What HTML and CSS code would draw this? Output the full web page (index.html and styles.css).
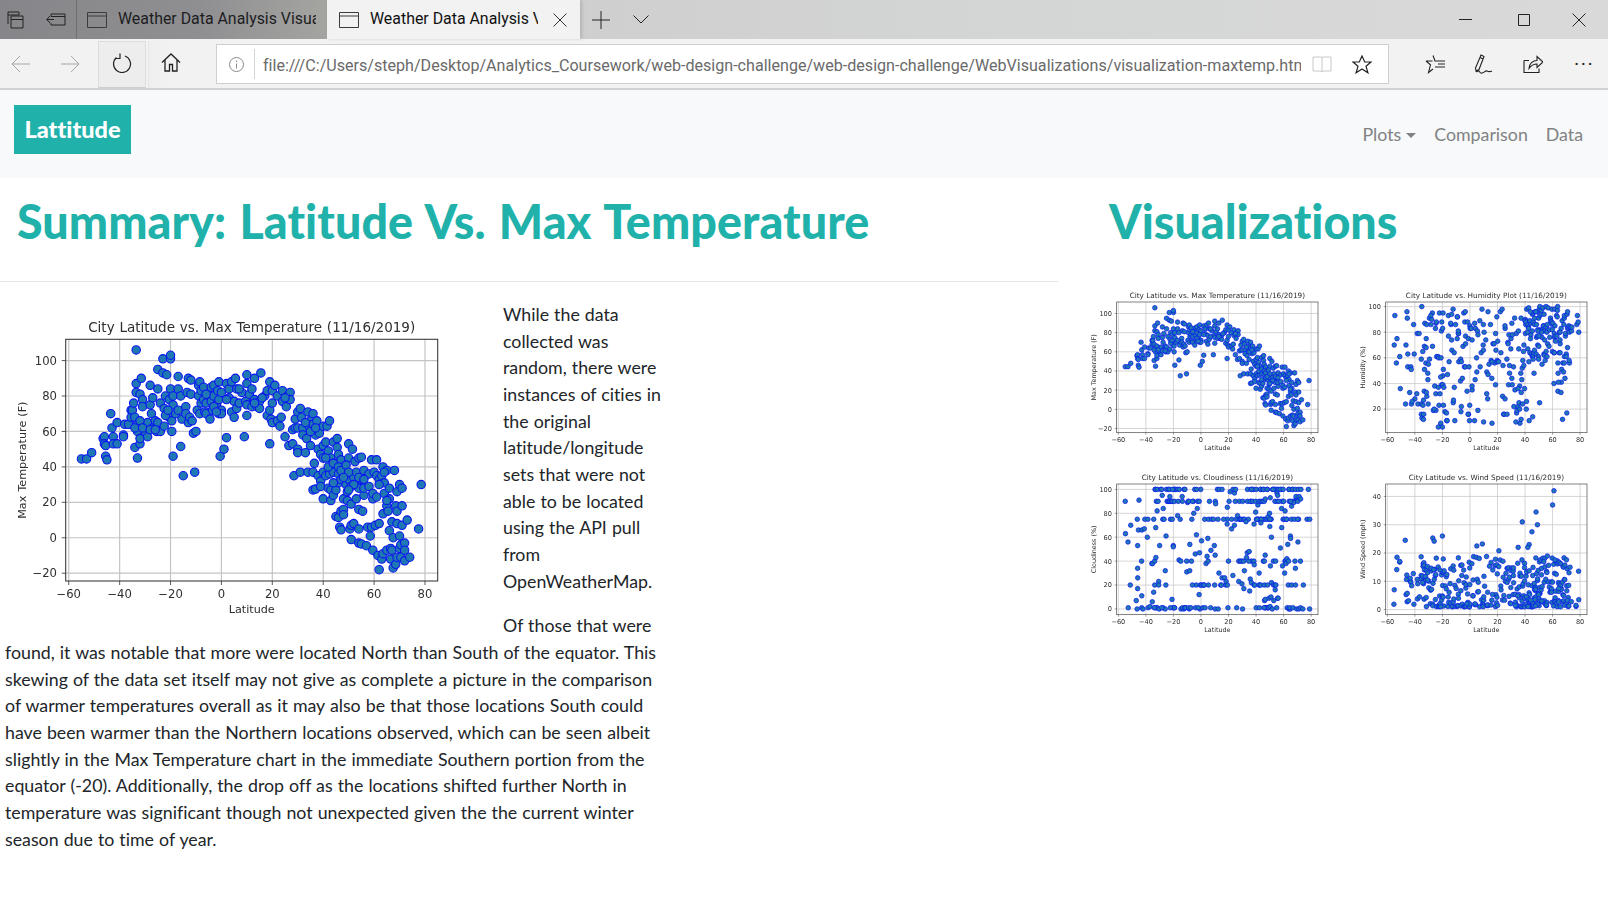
FILE: index.html
```html
<!DOCTYPE html>
<html lang="en">
<head>
<meta charset="utf-8">
<title>Weather Data Analysis Visualizations</title>
<link rel="stylesheet" href="styles.css">
</head>
<body>
<header class="chrome">
  <div class="tabstrip">
    <div class="strip-tools">
      <svg class="ico-tabs" viewBox="0 0 18 18"><path d="M1 13V1h11v3M1 4h11M4 17V5h12v12zM4 8.500h12"/></svg>
      <svg class="ico-aside" viewBox="0 0 20 13"><path d="M8 6.500H0.800M4 3L.8 6.500 4 10M5 3V1h14v11H5v-2M5 3.500h14"/></svg>
    </div>
    <div class="tab">
      <svg class="ico-page" viewBox="0 0 20 16"><path d="M.5 .5h19v15H.5zM.5 4h19"/></svg>
      <span class="tab-title">Weather Data Analysis Visualizations</span>
    </div>
    <div class="tab tab-active">
      <svg class="ico-page" viewBox="0 0 20 16"><path d="M.5 .5h19v15H.5zM.5 4h19"/></svg>
      <span class="tab-title">Weather Data Analysis Visualizations</span>
      <svg class="ico-x" viewBox="0 0 14 14"><path d="M.5 .5l13 13M13.500 .5l-13 13"/></svg>
    </div>
    <svg class="ico-plus" viewBox="0 0 18 18"><path d="M9 0v18M0 9h18"/></svg>
    <svg class="ico-chev" viewBox="0 0 16 9"><path d="M.5 .5L8 8 15.500 .5"/></svg>
    <div class="window-controls">
      <svg class="ico-min" viewBox="0 0 13 1"><path d="M0 .5h13"/></svg>
      <svg class="ico-max" viewBox="0 0 12 12"><path d="M.5 .5h11v11H.5z"/></svg>
      <svg class="ico-close" viewBox="0 0 14 14"><path d="M.5 .5l13 13M13.500 .5l-13 13"/></svg>
    </div>
  </div>
  <div class="toolbar">
    <svg class="ico-nav" viewBox="0 0 20 18"><path d="M19 9H1M9 1L1 9l8 8"/></svg>
    <svg class="ico-nav" viewBox="0 0 20 18"><path d="M1 9h18M11 1l8 8-8 8"/></svg>
    <div class="btn-refresh">
      <svg class="ico-refresh" viewBox="0 0 20 20"><path d="M13 3A8.500 8.500 0 1 1 4.500 4.500M8 .5V5.500H3"/></svg>
    </div>
    <div class="btn-home">
      <svg class="ico-home" viewBox="0 0 20 19"><path d="M1 9.500L10 1l9 8.500M4 7v11h4.500v-6.500h3V18H16V7"/></svg>
    </div>
    <div class="address">
      <svg class="ico-info" viewBox="0 0 15 15"><circle cx="7.500" cy="7.500" r="7"/><path d="M7.500 6.500v5M7.500 3.500v1.500"/></svg>
      <span class="address-sep"></span>
      <span class="url">file:///C:/Users/steph/Desktop/Analytics_Coursework/web-design-challenge/web-design-challenge/WebVisualizations/visualization-maxtemp.html</span>
      <svg class="ico-read" viewBox="0 0 20 17"><path d="M1 1h8.500l.5 1 .5-1H19v14h-8l-1 1-1-1H1zM10 2v13"/></svg>
      <svg class="ico-star" viewBox="0 0 20 19"><path d="M10 1l2.700 6h6.300l-5 4.200 1.900 6.600L10 14l-5.900 3.800L6 11.200 1 7h6.300z"/></svg>
    </div>
    <div class="tool-icons">
      <svg class="ico-tool" viewBox="0 0 20 19"><path d="M8 1l2 5.500h3M1 6.500h6.500M1 6.500l4.500 3.800L3.500 18 8 14.500M13 9.500h7M10 12.500h10M12 6.500h8"/></svg>
      <svg class="ico-tool" viewBox="0 0 20 20"><path d="M7 1l3 1.500-5 13-3 1.500-.5-3zM6 3.500l3 1.500M2 17c1 2 2-1 3 0s1 2.500 3 2c3-.5 3-3 5-2 2 1 3 1 5 0"/></svg>
      <svg class="ico-tool" viewBox="0 0 20 19"><path d="M1 6v12h15v-4M1 6h5M6 14c0-5 4-8 8-8V2l6 5.500-6 5.500V9.500c-3 0-6 1.500-8 4.500z"/></svg>
      <span class="more">···</span>
    </div>
  </div>
</header>

<nav class="navbar">
  <a class="brand">Lattitude</a>
  <ul class="nav-links">
    <li class="nav-item">Plots<span class="caret"></span></li>
    <li class="nav-item">Comparison</li>
    <li class="nav-item">Data</li>
  </ul>
</nav>

<main class="page">
  <section class="summary">
    <h1 class="heading heading-summary">Summary: Latitude Vs. Max Temperature</h1>
    <hr class="rule">
    <div class="copy">
      <svg class="plot plot-main" data-plot="temp" data-size="main"></svg>
      <p>While the data collected was random, there were instances of cities in the original latitude/longitude sets that were not able to be located using the API pull from OpenWeatherMap.</p>
      <p>Of those that were found, it was notable that more were located North than South of the equator. This skewing of the data set itself may not give as complete a picture in the comparison of warmer temperatures overall as it may also be that those locations South could have been warmer than the Northern locations observed, which can be seen albeit slightly in the Max Temperature chart in the immediate Southern portion from the equator (-20). Additionally, the drop off as the locations shifted further North in temperature was significant though not unexpected given the the current winter season due to time of year.</p>
    </div>
  </section>
  <aside class="gallery">
    <h1 class="heading heading-gallery">Visualizations</h1>
    <div class="thumbs">
      <svg class="plot plot-thumb" data-plot="temp" data-size="thumb"></svg>
      <svg class="plot plot-thumb" data-plot="humidity" data-size="thumb"></svg>
      <svg class="plot plot-thumb" data-plot="cloud" data-size="thumb"></svg>
      <svg class="plot plot-thumb" data-plot="wind" data-size="thumb"></svg>
    </div>
  </aside>
</main>
<script src="plots.js"></script>
</body>
</html>
```
FILE: styles.css
```css
* { box-sizing: border-box; }
html, body { margin: 0; padding: 0; }
body {
  background: #fff;
  color: #212529;
  font-family: "Lato", "Liberation Sans", sans-serif;
  font-size: 17.78px;
  line-height: 26.67px;
  font-variant-ligatures: none;
  overflow: hidden;
  height: 921px;
}
svg { display: block; flex: none; fill: none; stroke: #222; stroke-width: 1; }

/* browser chrome */
.chrome { font-family: "Roboto", "Liberation Sans", sans-serif; }
.tabstrip {
  height: 39px;
  display: flex;
  align-items: center;
  background: linear-gradient(90deg, #86868a 0, #8f8f92 200px, #a3a3a0 320px, #cfcfcf 590px, #d4d5d5 1000px, #d9d9d9 100%);
}
.strip-tools {
  width: 77px;
  height: 39px;
  display: flex;
  align-items: center;
  gap: 21px;
  padding-left: 7px;
  border-right: 1px solid #6e6e70;
}
.ico-tabs { width: 18px; height: 18px; }
.ico-aside { width: 20px; height: 13px; }
.tab {
  width: 250px;
  height: 39px;
  display: flex;
  align-items: center;
  gap: 11px;
  padding-left: 10px;
  font-size: 15.9px;
  color: #1d1d1f;
}
.tab-active {
  width: 253px;
  padding-left: 12px;
  background: #f2f2f2;
  color: #111;
  box-shadow: 2px 0 3px rgba(0, 0, 0, .12);
}
.ico-page { width: 20px; height: 16px; stroke: #3b3b3b; }
.tab-title {
  white-space: nowrap;
  overflow: hidden;
  width: 198px;
}
.tab-active .tab-title { width: 168px; }
.ico-x { width: 14px; height: 14px; margin-left: 4px; stroke: #333; }
.ico-plus { width: 18px; height: 18px; margin-left: 12px; }
.ico-chev { width: 16px; height: 9px; margin-left: 23px; }
.window-controls {
  margin-left: auto;
  display: flex;
  align-items: center;
  gap: 44px;
  padding-right: 22px;
}
.ico-min { width: 13px; height: 1px; margin-right: 2px; }
.ico-max { width: 12px; height: 12px; }
.ico-close { width: 14px; height: 14px; margin-left: -2px; }

.toolbar {
  height: 51px;
  display: flex;
  align-items: center;
  background: #f2f2f2;
  border-bottom: 2px solid #d2d2d2;
  padding-left: 11px;
}
.ico-nav { width: 20px; height: 18px; stroke: #a6a6a6; margin-right: 29px; }
.ico-nav + .btn-refresh { margin-left: -11px; }
.btn-refresh {
  width: 48px;
  height: 47px;
  margin-top: 2px;
  padding-bottom: 4px;
  display: flex;
  align-items: center;
  justify-content: center;
  background: #ededed;
  border: 1px solid #dcdcdc;
  border-bottom-color: #cfcfcf;
}
.ico-refresh { width: 20px; height: 20px; stroke-width: 1.2; }
.btn-home {
  width: 44px;
  height: 47px;
  margin-top: 2px;
  margin-left: 2px;
  padding-bottom: 4px;
  display: flex;
  align-items: center;
  justify-content: center;
  border-left: 1px solid #e6e6e6;
  background: linear-gradient(90deg, #efefef, #f2f2f2 60%);
}
.ico-home { width: 20px; height: 19px; stroke-width: 1.3; }
.address {
  width: 1173px;
  height: 40px;
  margin-left: 24px;
  margin-top: 1px;
  display: flex;
  align-items: center;
  background: #fff;
  border: 1px solid #d0d0d0;
  padding-left: 12px;
}
.ico-info { width: 15px; height: 15px; stroke: #8a8a8a; }
.address-sep { width: 1px; height: 30px; background: #d4d4d4; margin: 0 8px 0 10px; }
.url {
  width: 1038px;
  padding-top: 4px;
  font-size: 16.1px;
  color: #6a6a6a;
  white-space: nowrap;
  overflow: hidden;
}
.ico-read { width: 20px; height: 17px; stroke: #c8c8c8; margin-left: 11px; }
.ico-star { width: 20px; height: 19px; margin-left: 20px; stroke-width: 1.2; }
.tool-icons {
  display: flex;
  align-items: center;
  gap: 29px;
  margin-left: 36px;
}
.ico-tool { width: 20px; height: 20px; stroke-width: 1.1; }
.more { font-size: 20px; letter-spacing: 1.5px; color: #222; margin-left: 2px; line-height: 20px; }

/* navbar */
.navbar {
  height: 88px;
  background: #f8f9fa;
  display: flex;
  align-items: center;
  justify-content: space-between;
  padding: 0 25px 0 14px;
}
.brand {
  width: 117px;
  height: 49px;
  margin-top: -10px;
  display: flex;
  align-items: center;
  justify-content: center;
  background: #20b2aa;
  color: #fff;
  font-weight: 900;
  font-size: 23.5px;
}
.nav-links {
  list-style: none;
  margin: 0;
  padding: 0;
  display: flex;
  gap: 18px;
}
.nav-item { color: #808283; font-size: 17.78px; }
.caret {
  display: inline-block;
  margin-left: 5px;
  vertical-align: 3px;
  border-top: 5px solid #808283;
  border-left: 5px solid transparent;
  border-right: 5px solid transparent;
}

/* page */
.page { display: flex; }
.summary { width: 1058px; flex: none; }
.heading {
  margin: 0;
  color: #20b2aa;
  font-weight: 900;
  font-size: 46.6px;
  line-height: 58px;
  padding-top: 14px;
  word-spacing: 2px;
}
.heading-summary { padding-left: 17px; letter-spacing: .08px; }
.heading-gallery { padding-left: 51px; }
.rule { margin: 31px 0 19px; border: 0; border-top: 1px solid #e3e4e5; height: 0; }
.copy { width: 665px; padding-left: 5px; word-spacing: .5px; }
.copy p { margin: 0 0 17.78px; }

.plot { overflow: visible; }
.plot-main { float: left; width: 490px; height: 320px; margin-right: 8px; filter: blur(.35px); }
.plot-thumb { width: 269px; height: 182px; filter: blur(.4px); }
.thumbs {
  display: grid;
  grid-template-columns: 269px 269px;
  grid-auto-rows: 182px;
  margin: 30px 0 0 22px;
}
.gridline { stroke: #c4c4c4; }
.spine { fill: none; stroke: #3a3a3a; }
.tick { stroke: #3a3a3a; }
.dot { fill: #1f77b4; stroke: #0a14f0; }
.plot text { fill: #2e2e2e; stroke: none; font-family: "DejaVu Sans", sans-serif; }
```
FILE: plots.js
```js
(function () {
  var NS = "http://www.w3.org/2000/svg";
  var T = [[-55,44.5],[-53,44.5],[-51,48],[-46.5,56],[-46,57],[-46,53],[-45.5,52],[-45.5,46],[-45,44],[-43.5,70],[-43,62],[-42.5,57],[-42.5,53],[-41,53],[-41,65],[-38.5,58],[-38.5,57],[-38,64],[-36.5,64],[-35.5,68],[-35.5,72],[-35,72],[-34.5,76],[-34,51],[-34,68],[-33.5,106],[-33.5,87],[-33.5,82],[-33,45],[-33,60],[-33,64],[-32,81],[-32,53],[-32,56],[-31.5,90],[-31,78],[-31,74],[-30,60],[-30,64],[-29,57],[-29,65],[-28,86],[-28,75],[-27.5,70],[-27,62],[-27,79],[-26,66],[-25.5,60],[-25,65],[-25,84],[-25,95],[-24,76],[-24,60],[-23,93],[-23,101],[-22.5,73],[-22.5,63],[-22,80],[-21.5,70],[-21.5,92],[-20.5,68],[-20.5,78],[-20,84],[-20,101],[-20,103],[-19.5,66],[-19.5,60],[-19,46],[-19,80],[-19,75],[-18,70],[-17,72],[-17,91],[-17,84],[-16,51.5],[-16,80],[-15.5,67],[-15,35],[-14,74],[-14,70],[-13.5,82],[-13,65],[-13,90],[-12.5,68],[-12,81],[-12,89],[-11.5,66],[-11,59],[-10.5,37],[-10,60],[-9.5,72],[-9,80],[-9,86],[-8.5,70],[-8.5,88],[-8,76],[-8,83],[-7,85],[-7,78],[-6.5,71],[-6,76],[-6,70],[-5,81],[-4.5,67],[-4,85],[-4,77],[-3.5,72],[-3,86],[-3,80],[-2,75],[-1.5,83],[-1,70],[-1,78],[-1,88],[-0.5,46],[0,72],[0,82],[0,70],[1,50],[2,56.5],[2,87],[3,84],[3,79],[4,71],[4,88],[5,68],[5,77],[5.5,90],[6,73],[6,84],[7,76],[8,82],[9,57],[9.5,77],[10,69],[10,92],[10,87],[10,75],[11,81],[12,84],[12,74],[13,90],[13,78],[14,74],[15,77],[15,73],[15.5,93],[17,80],[18,83],[18,69],[19,53],[19,88],[19,72],[19.5,67],[20,83],[20,76],[20,65],[21,86],[22,66],[22,80],[23,63],[23.5,68],[24,83],[24,77],[25,57],[25.5,74],[26,80],[26.5,52],[27,82],[27,78],[28,53],[28,61],[28.5,35],[29,67],[29,62],[30,71],[30,50],[30,48],[30,62],[31,73],[31,37],[31.5,68],[32,62],[32,58],[33,48],[33.5,56],[34,71],[34,37],[34.5,63],[35,66],[35,52],[36,70],[36,64],[36,37],[36,27],[36.5,42],[37,58],[37,27.5],[37.5,66],[38,50],[38,35],[38.5,59],[39,32],[39,29],[39,47],[40,63],[40,52],[40,45],[40,37],[40,22],[41,54],[41,35],[41.5,63],[42,28],[42,49],[42.5,66],[42.5,36],[43,21],[43,45],[43,27],[44,54],[44,24],[44,37],[45,12],[45,27],[45,42],[45.5,51],[45.5,56],[46,11.5],[46,31],[46,47],[46,36],[46.5,6],[47,4.5],[47,15],[47,44],[47,33],[48,16],[48,22],[48,40],[48,13],[49,36],[49,30],[49.5,21],[49.5,26],[50,53],[50,45],[50,33],[50.5,5],[51,7],[51,19],[51,29],[51,-1],[51.5,50],[52,34],[52,8],[52.5,43],[53,22],[53,30],[53,37],[54,5],[54,16],[54,28],[54,-3],[54,45],[55,-3.5],[55,45.5],[55,33],[55.5,15],[56,24],[56,38],[56,28],[57,-4.5],[57.5,6],[58,36],[58,29],[58.5,1],[59,6],[59,44],[59.5,-7],[59.5,22],[59.5,25],[60,37],[60.5,7],[61,44],[61,23],[61,35],[61.5,-10],[62,8],[62,-18],[62,33],[63,35],[63,-12],[63.5,-9],[63.5,13.5],[63.5,40],[64,25],[64,31],[65,18],[65,38],[65,-7],[65.5,15],[66,28],[66,4],[66,22],[66.5,-12],[66.5,-6],[67,9],[67,-7],[67.5,0],[68,38],[67.5,-17],[68.5,-15],[68.5,18],[69,-11],[69,15],[69,26],[69,8],[70,1],[70,30],[70,-6],[70.5,-11],[70.5,-4],[71,7],[71,28],[71,18],[72,-3],[72,-7],[72,-13],[73,10],[74,-11],[77.5,5],[78.5,30],
  [-34,62],[-32,66],[-31,62],[-28,61],[-26,61],[-22,69],[-21,72],[-6,81],[-3,74],[-2,71],[2,78],[7,84],[13,76],[16,79],[25,79],[33,65],[35,60],[37,62],[41,45],[42,40],[44,42],[46,40],[47,38],[49,41],[50,37],[52,30],[54,34],[56,33],[62,30],[64,37],[65,21],[44,31],[48,34],[50,27]];

  var seed = 12345;
  function rnd() { seed = (seed * 16807) % 2147483647; return seed / 2147483647; }

  var lats = T.map(function (p) { return p[0]; });

  function humidity() {
    var out = lats.map(function (la) {
      var hi = la > 38 ? 0.88 : la > 18 ? 0.6 : 0.55;
      var v = rnd() < hi ? 55 + rnd() * 45 : 8 + rnd() * 48;
      if (la > 38 && rnd() < .3) v = 75 + rnd() * 25;
      return [la + rnd() - .5, Math.min(100, Math.round(v))];
    });
    return out.concat([[-55,70],[-53,75],[-51,61],[-40,28],[-42,26],[-35,100],[-23,6],[-20,6],[61,40],[69,44],[64,48],[72,58],[78,93],[79,80],[74,84],[16,9],[43,11]]);
  }
  function cloud() {
    var rows = [0, 1, 1, 20, 40, 75, 75, 90, 90, 100, 100, 100];
    var out = lats.map(function (la) {
      var r = rnd(), v;
      if (r < .68) {
        v = rows[Math.floor(rnd() * rows.length)];
        if (la > 0 && la < 20 && rnd() < .3) v = 20;
        if (la > 20 && la < 60 && v < 20 && rnd() < .3) v = 90;
      } else {
        v = Math.round(rnd() * 100);
      }
      return [la + rnd() - .5, v];
    });
    return out.concat([[-55,90],[-53,56],[-51,70],[-47,7],[-46,34],[-46,53],[-43,11],[78,100],[79,75],[74,0]]);
  }
  function wind() {
    var out = lats.map(function (la) {
      var v = 1 + Math.pow(rnd(), 1.9) * 18;
      if (la < -25 && rnd() < .5) v = 8 + rnd() * 11;
      return [la + rnd() - .5, v];
    });
    return out.concat([[60,37],[61,42],[48,34.500],[49,30],[38,31],[45,27.500],[43,23],[42,22],[-55,7],[-47,24.500],[-27,25.300],[-26,24.200],[-20,26],[5,22.500],[9,23.200],[21,20.800],[35,22],[-53,18.500],[-51,17],[79,3.500],[77,1.500]]);
  }

  var X = { lim: [-61.2, 85], ticks: [-60, -40, -20, 0, 20, 40, 60, 80], label: "Latitude" };
  var SETS = {
    temp: { title: "City Latitude vs. Max Temperature (11/16/2019)", ylabel: "Max Temperature (F)", ylim: [-24.4, 112], yticks: [-20, 0, 20, 40, 60, 80, 100], data: T },
    humidity: { title: "City Latitude vs. Humidity Plot (11/16/2019)", ylabel: "Humidity (%)", ylim: [1.6, 103.6], yticks: [20, 40, 60, 80, 100], data: humidity() },
    cloud: { title: "City Latitude vs. Cloudiness (11/16/2019)", ylabel: "Cloudiness (%)", ylim: [-4.8, 104.5], yticks: [0, 20, 40, 60, 80, 100], data: cloud() },
    wind: { title: "City Latitude vs. Wind Speed (11/16/2019)", ylabel: "Wind Speed (mph)", ylim: [-1.8, 44.4], yticks: [0, 10, 20, 30, 40], data: wind() }
  };
  var SIZES = {
    main: { w: 490, h: 320, l: 60.7, r: 432.7, t: 38.3, b: 280, title: 13.5, tick: 11.6, label: 11.2, r0: 4.2, sw: 1.1, gw: 1.2, tickLen: 4, tickY: 297, labelY: 312, titleY: 31, ylabelX: 21, tickX: 52 },
    thumb: { w: 269, h: 182, l: 36.7, r: 238, t: 22, b: 152.7, title: 7.3, tick: 6.6, label: 6.4, r0: 2.3, sw: .7, gw: .7, tickLen: 2, tickY: 162, labelY: 170, titleY: 18, ylabelX: 16, tickX: 32 }
  };

  function el(parent, name, attrs, text) {
    var n = document.createElementNS(NS, name);
    for (var k in attrs) n.setAttribute(k, attrs[k]);
    if (text !== undefined) n.textContent = text;
    parent.appendChild(n);
    return n;
  }
  function fmt(v) { return v < 0 ? "\u2212" + Math.abs(v) : String(v); }

  document.querySelectorAll("svg[data-plot]").forEach(function (svg) {
    var set = SETS[svg.dataset.plot], s = SIZES[svg.dataset.size];
    svg.setAttribute("viewBox", "0 0 " + s.w + " " + s.h);
    function px(v) { return s.l + (v - X.lim[0]) / (X.lim[1] - X.lim[0]) * (s.r - s.l); }
    function py(v) { return s.b - (v - set.ylim[0]) / (set.ylim[1] - set.ylim[0]) * (s.b - s.t); }

    X.ticks.forEach(function (t) {
      var x = px(t);
      el(svg, "line", { class: "gridline", x1: x, x2: x, y1: s.t, y2: s.b, "stroke-width": s.gw });
      el(svg, "line", { class: "tick", x1: x, x2: x, y1: s.b, y2: s.b + s.tickLen, "stroke-width": s.gw * .7 });
      el(svg, "text", { x: x, y: s.tickY, "text-anchor": "middle", "font-size": s.tick }, fmt(t));
    });
    set.yticks.forEach(function (t) {
      var y = py(t);
      el(svg, "line", { class: "gridline", x1: s.l, x2: s.r, y1: y, y2: y, "stroke-width": s.gw });
      el(svg, "line", { class: "tick", x1: s.l - s.tickLen, x2: s.l, y1: y, y2: y, "stroke-width": s.gw * .7 });
      el(svg, "text", { x: s.tickX, y: y + s.tick * .36, "text-anchor": "end", "font-size": s.tick }, fmt(t));
    });
    set.data.forEach(function (p) {
      el(svg, "circle", { class: "dot", cx: px(p[0]), cy: py(p[1]), r: s.r0, "stroke-width": s.sw });
    });
    el(svg, "rect", { class: "spine", x: s.l, y: s.t, width: s.r - s.l, height: s.b - s.t, "stroke-width": s.gw * .9 });
    el(svg, "text", { x: (s.l + s.r) / 2, y: s.titleY, "text-anchor": "middle", "font-size": s.title }, set.title);
    el(svg, "text", { x: (s.l + s.r) / 2, y: s.labelY, "text-anchor": "middle", "font-size": s.label }, X.label);
    var cy = (s.t + s.b) / 2;
    el(svg, "text", { x: s.ylabelX, y: cy, "text-anchor": "middle", "font-size": s.label, transform: "rotate(-90 " + s.ylabelX + " " + cy + ")" }, set.ylabel);
  });
})();
```
